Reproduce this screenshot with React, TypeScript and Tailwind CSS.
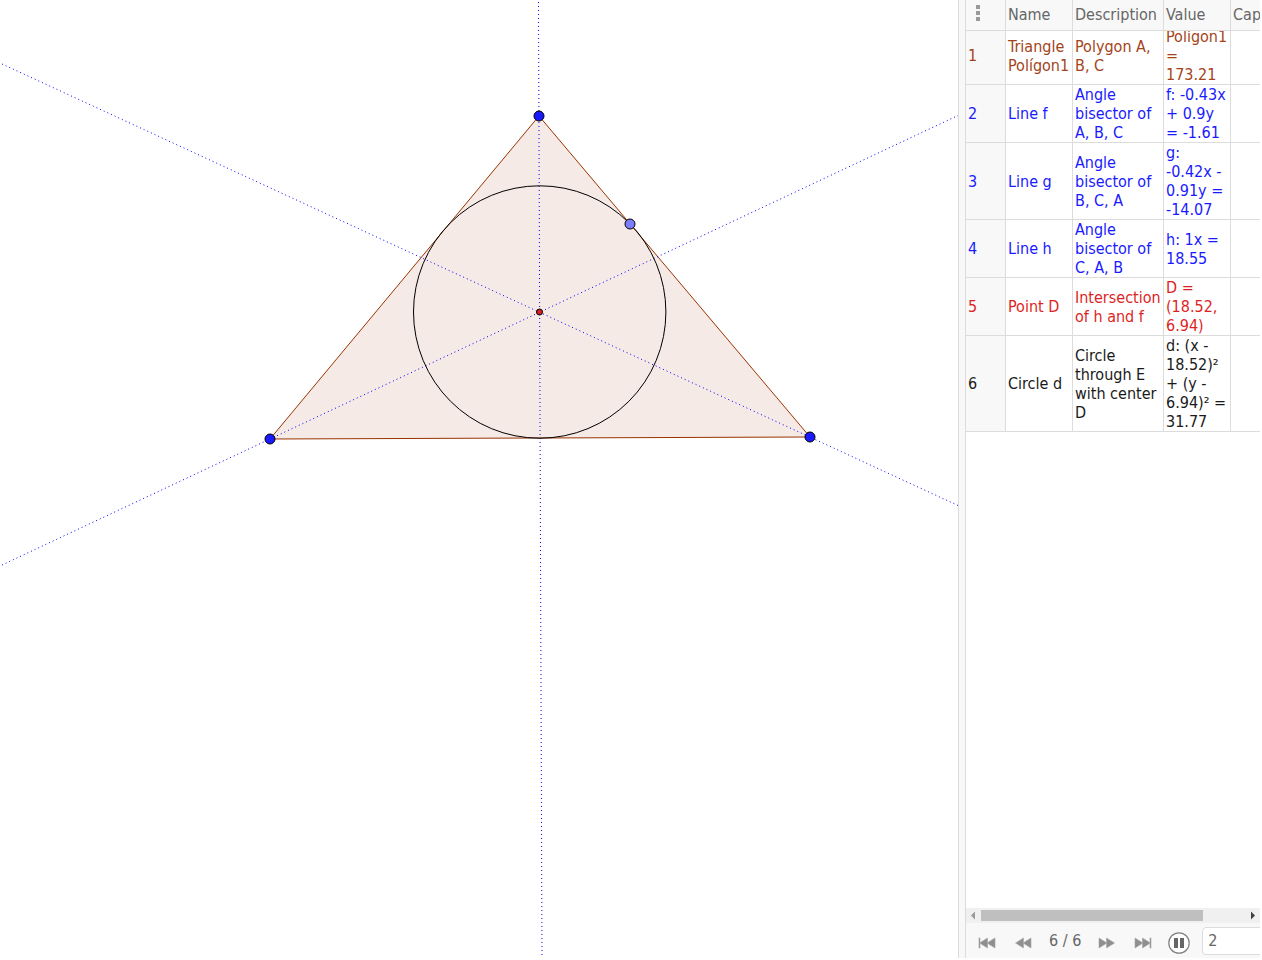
import { useState } from "react";

type Step = {
  no: number;
  name: string;
  description: string;
  value: string;
  caption: string;
  color: string;
};

const steps: Step[] = [
  {
    no: 1,
    name: "Triangle Polígon1",
    description: "Polygon A, B, C",
    value: "Polígon1 = 173.21",
    caption: "",
    color: "text-[#a3441a]",
  },
  {
    no: 2,
    name: "Line f",
    description: "Angle bisector of A, B, C",
    value: "f: -0.43x + 0.9y = -1.61",
    caption: "",
    color: "text-[#1a1aff]",
  },
  {
    no: 3,
    name: "Line g",
    description: "Angle bisector of B, C, A",
    value: "g: -0.42x - 0.91y = -14.07",
    caption: "",
    color: "text-[#1a1aff]",
  },
  {
    no: 4,
    name: "Line h",
    description: "Angle bisector of C, A, B",
    value: "h: 1x = 18.55",
    caption: "",
    color: "text-[#1a1aff]",
  },
  {
    no: 5,
    name: "Point D",
    description: "Intersection of h and f",
    value: "D = (18.52, 6.94)",
    caption: "",
    color: "text-[#de1f1f]",
  },
  {
    no: 6,
    name: "Circle d",
    description: "Circle through E with center D",
    value: "d: (x - 18.52)² + (y - 6.94)² = 31.77",
    caption: "",
    color: "text-[#1a1a1a]",
  },
];

const Columns = () => (
  <colgroup>
    <col className="w-10" />
    <col className="w-[67px]" />
    <col className="w-[91px]" />
    <col className="w-[67px]" />
    <col className="w-[85px]" />
  </colgroup>
);

const GraphicsView = () => (
  <svg
    className="h-full w-full"
    role="img"
    aria-label="Triangle with angle bisectors and inscribed circle"
  >
    <polygon
      points="539,116 270,439 810,437"
      fill="#993300"
      fillOpacity="0.1"
      stroke="#993300"
    />
    <g stroke="#0000ff" strokeDasharray="1 3">
      <line x1="2" y1="64" x2="958" y2="505.5" />
      <line x1="2" y1="565" x2="958" y2="115.5" />
      <line x1="538.5" y1="2" x2="542" y2="956" />
    </g>
    <circle cx="539.7" cy="312" r="126.2" fill="none" stroke="#000000" />
    <g fill="#1a1aff" stroke="#000000">
      <circle cx="539" cy="116" r="5" />
      <circle cx="270" cy="439" r="5" />
      <circle cx="810" cy="437" r="5" />
      <circle cx="630" cy="224" r="5" fill="#7d7dff" />
    </g>
    <circle cx="539.5" cy="312" r="3" fill="#de1f1f" stroke="#000000" />
  </svg>
);

const StepIcon = ({ bar, flip }: { bar?: boolean; flip?: boolean }) => (
  <svg
    viewBox="0 0 18 12"
    className={flip ? "h-3 w-[18px] -scale-x-100" : "h-3 w-[18px]"}
    fill="#8f8f8f"
    stroke="#a6a6a6"
    strokeWidth="0.6"
  >
    {bar && <rect x="1" y="1" width="1" height="10" />}
    <path d="M9.5 1v10L1.500 6z" />
    <path d="M17 1v10L9 6z" />
  </svg>
);

const App = () => {
  const [current, setCurrent] = useState(steps.length);
  const [delay, setDelay] = useState("2");

  return (
    <div className="flex h-screen bg-white pr-0.5 pb-0.5 font-['DejaVu_Sans_Condensed','DejaVu_Sans',sans-serif] text-base leading-[19px]">
      <main className="min-w-0 flex-1 overflow-hidden">
        <GraphicsView />
      </main>
      <div className="w-2 shrink-0 border-x border-[#dcdcdc] bg-[#f8f8f8]" />
      <aside className="flex w-[294px] shrink-0 flex-col overflow-hidden">
        <div className="min-h-0 flex-1 overflow-hidden">
          <table className="w-[350px] table-fixed border-separate border-spacing-0">
            <Columns />
            <thead className="bg-[#f8f8f8] text-[#666666]">
              <tr className="text-left">
                <th className="h-[31px] border-r border-b border-[#dcdcdc] px-0 pt-0 pb-1">
                  <button aria-label="Columns" className="block px-2.5">
                    <svg viewBox="0 0 4 16" className="h-4 w-1" fill="#999999">
                      <rect width="4" height="4" />
                      <rect y="6" width="4" height="4" />
                      <rect y="12" width="4" height="4" />
                    </svg>
                  </button>
                </th>
                {["Name", "Description", "Value", "Caption"].map((title) => (
                  <th
                    key={title}
                    className="border-r border-b border-[#dcdcdc] px-0.5 pt-0 pb-px font-normal"
                  >
                    {title}
                  </th>
                ))}
              </tr>
            </thead>
          </table>
          <div className="overflow-hidden">
            <table className="-mt-1 w-[350px] table-fixed border-separate border-spacing-0">
              <Columns />
              <tbody>
                {steps.map((step) => (
                  <tr
                    key={step.no}
                    className={step.color}
                    onDoubleClick={() => setCurrent(step.no)}
                  >
                    <td className="border-r border-b border-[#dcdcdc] bg-[#f8f8f8] px-0.5 py-0">
                      {step.no}
                    </td>
                    <td className="border-r border-b border-[#dcdcdc] px-0.5 py-0">
                      {step.name}
                    </td>
                    <td className="border-r border-b border-[#dcdcdc] px-0.5 py-0">
                      {step.description}
                    </td>
                    <td className="border-r border-b border-[#dcdcdc] px-0.5 py-0">
                      {step.value}
                    </td>
                    <td className="border-r border-b border-[#dcdcdc] px-0.5 py-0">
                      {step.caption}
                    </td>
                  </tr>
                ))}
              </tbody>
            </table>
          </div>
        </div>

        <div className="flex h-[15px] shrink-0 items-center bg-[#f0f0f0]">
          <svg viewBox="0 0 15 15" className="w-[15px]" fill="#999999">
            <path d="M9 3.500v8L5 7.500z" />
          </svg>
          <div className="flex-1">
            <div className="h-[11px] w-[84%] bg-[#bfbfbf]" />
          </div>
          <svg viewBox="0 0 15 15" className="w-[15px]" fill="#404040">
            <path d="M6 3.500v8l4-4z" />
          </svg>
        </div>

        <div className="flex h-[35px] shrink-0 items-center bg-[#f8f8f8] pt-1 pl-3 text-[#666666]">
          <button
            aria-label="First step"
            className="shrink-0"
            onClick={() => setCurrent(1)}
          >
            <StepIcon bar />
          </button>
          <button
            aria-label="Previous step"
            className="ml-[18px] shrink-0"
            onClick={() => setCurrent(Math.max(1, current - 1))}
          >
            <StepIcon />
          </button>
          <span className="mx-[17px] shrink-0 pb-1 whitespace-nowrap">
            {current} / {steps.length}
          </span>
          <button
            aria-label="Next step"
            className="shrink-0"
            onClick={() => setCurrent(Math.min(steps.length, current + 1))}
          >
            <StepIcon flip />
          </button>
          <button
            aria-label="Last step"
            className="ml-[18px] shrink-0"
            onClick={() => setCurrent(steps.length)}
          >
            <StepIcon bar flip />
          </button>
          <button aria-label="Pause" className="ml-4 shrink-0">
            <svg viewBox="0 0 22 22" className="h-[22px] w-[22px]">
              <circle cx="11" cy="11" r="10.200" fill="#ffffff" stroke="#808080" strokeWidth="1.200" />
              <rect x="6" y="6" width="4" height="10" fill="#666666" />
              <rect x="12" y="6" width="4" height="10" fill="#666666" />
            </svg>
          </button>
          <input
            aria-label="Seconds per step"
            className="mb-1 ml-3 h-7 w-20 shrink-0 rounded border border-[#dcdcdc] bg-white px-[5px] outline-none"
            value={delay}
            onChange={(e) => setDelay(e.target.value)}
          />
        </div>
      </aside>
    </div>
  );
};

export default App;
